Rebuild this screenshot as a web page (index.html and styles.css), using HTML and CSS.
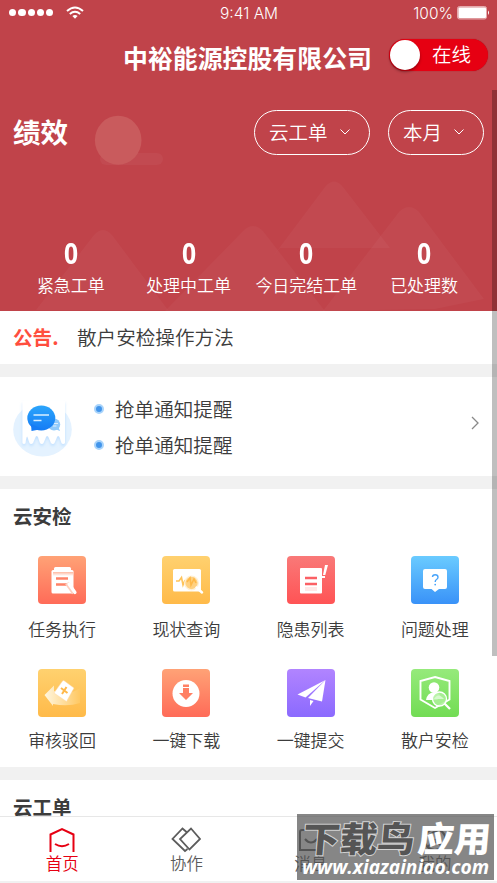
FILE: index.html
```
<!DOCTYPE html>
<html lang="zh-CN">
<head>
<meta charset="utf-8">
<title>中裕能源控股有限公司</title>
<link rel="stylesheet" href="styles.css">
</head>
<body>
<div class="screen">
  <header class="hero">
    <svg class="hero-art" viewBox="0 0 497 311" aria-hidden="true">
      <rect x="100" y="153" width="63" height="12" rx="6" fill="#fff" fill-opacity=".04"/>
      <ellipse cx="118.200" cy="140.200" rx="23.300" ry="24.500" fill="#c95b5d"/>
      <g fill="#fff" fill-opacity=".035">
        <path d="M36 310L94 235Q103 225 112 235L168 310Z"/>
        <path d="M165 311L243 231Q253 221 263 231L325 311Z"/>
        <path d="M271 259L325 187Q334 176 343 187L390 248H280Z"/>
        <path d="M323 311L399 212Q409 202 419 212L484 299L435 309Z"/>
      </g>
    </svg>
    <div class="status">
      <div class="signal">
        <i></i><i></i><i></i><i></i><i></i>
        <svg class="wifi" viewBox="0 0 18 13" fill="none" stroke="#fff" stroke-width="2">
          <path d="M1 5Q9-2 17 5M3.800 8Q9 3.600 14.200 8"/><path d="M6.400 10Q9 8 11.600 10L9 12.700Z" fill="#fff" stroke="none"/>
        </svg>
      </div>
      <span class="time">9:41 AM</span>
      <div class="power"><span>100%</span>
        <svg class="battery" viewBox="0 0 33 14"><rect x=".5" y=".5" width="29" height="12.500" rx="2" fill="#d9878b" stroke="#e5aaad"/><rect x="1.500" y="1.500" width="27.500" height="10.500" rx="1" fill="#fff"/><path d="M31 4.500Q33 6.700 31 9Z" fill="#fff"/></svg>
      </div>
    </div>
    <div class="titlebar">
      <h1>中裕能源控股有限公司</h1>
      <div class="switch"><span class="knob"></span><span>在线</span></div>
    </div>
    <div class="filters">
      <h2>绩效</h2>
      <div class="pill pill-wide">云工单<svg viewBox="0 0 10 6"><path d="M.5.500L5 5L9.500.500"/></svg></div>
      <div class="pill">本月<svg viewBox="0 0 10 6"><path d="M.5.500L5 5L9.500.500"/></svg></div>
    </div>
    <div class="stats">
      <div><b>0</b><span>紧急工单</span></div>
      <div><b>0</b><span>处理中工单</span></div>
      <div><b>0</b><span>今日完结工单</span></div>
      <div><b>0</b><span>已处理数</span></div>
    </div>
  </header>

  <section class="notice"><strong>公告.</strong><span>散户安检操作方法</span></section>

  <section class="reminders">
    <svg class="chat" viewBox="0 0 60 60">
      <defs>
        <linearGradient id="chatBlue" x2="0" y2="1"><stop stop-color="#2ba5fb"/><stop offset="1" stop-color="#167cf5"/></linearGradient>
        <filter id="paper" x="-20%" y="-20%" width="140%" height="150%"><feDropShadow dx="0" dy="2" stdDeviation="1.500" flood-color="#79bdff" flood-opacity=".35"/></filter>
      </defs>
      <ellipse cx="29.500" cy="30.500" rx="29.300" ry="27" fill="#e4f2ff"/>
      <path filter="url(#paper)" fill="#fff" d="M9.500 2H52V44Q50 46 48.500 44L46.500 38Q45 36 44 38L41.500 44Q40 46 38 44L35.500 38Q34 36 33 38L30.500 44Q29 46 27 44L25 38Q23.500 36 22.500 38L20 44Q18 46 16.500 44L14.500 38Q13.500 36 12.500 44Q11 46 9.500 44Z"/>
      <ellipse cx="41" cy="25.500" rx="6.200" ry="6" fill="#91cafb"/><path d="M42 30L47 32L45 27Z" fill="#91cafb"/><path d="M40 24.500H45M40 27H43.500" stroke="#fff" stroke-opacity=".7"/>
      <ellipse cx="28.300" cy="19" rx="14" ry="12.500" fill="url(#chatBlue)"/><path d="M18 25L18.500 32L29 30Z" fill="#167cf5"/>
      <path d="M20.500 16H36M20.500 21.500H28.500" stroke="#d9efff" stroke-width="1.500"/>
    </svg>
    <ul><li>抢单通知提醒</li><li>抢单通知提醒</li></ul>
    <svg class="more" viewBox="0 0 8 14"><path d="M1 1L7 7L1 13"/></svg>
  </section>

  <section class="services">
    <h3>云安检</h3>
    <div class="grid">
      <div class="item"><span class="tile orange"><svg viewBox="0 0 48 48">
        <defs><linearGradient id="fadeOrange" x2="0" y2="1"><stop stop-color="#ffb9a0"/><stop offset="1" stop-color="#fff"/></linearGradient></defs>
        <rect x="13.500" y="14" width="22" height="23.500" rx="1.500" fill="#fff"/><path d="M15 16H35V20H15Z" fill="url(#fadeOrange)"/><rect x="16" y="11" width="17" height="5" rx="1.500" fill="#fff"/>
        <path d="M18 22.500H30M18 28.500H29" stroke="#ff8267" stroke-width="2.500"/><path d="M29 27L36 37" stroke="#ffcfc0" stroke-width="4.500"/><path d="M31 28L37 36.500" stroke="#fff" stroke-width="3.200" stroke-linecap="round"/></svg></span><span>任务执行</span></div>
      <div class="item"><span class="tile yellow"><svg viewBox="0 0 48 48" fill="none">
        <rect x="11" y="13" width="28" height="22.500" rx="1.500" fill="#fff"/><path d="M14 25H17L19.500 21.500L21 29L23 24" stroke="#ffc45a" stroke-width="1.600"/>
        <circle cx="29.500" cy="27" r="6.800" fill="#ffd181" stroke="#fff1d7" stroke-width="1.300"/><path d="M25 26L28 22L29 29L32 23L34 27" stroke="#ffb948" stroke-width="1.600"/><path d="M34.500 31.500L40 36.500" stroke="#fff" stroke-width="2.500" stroke-linecap="round"/></svg></span><span>现状查询</span></div>
      <div class="item"><span class="tile red"><svg viewBox="0 0 48 48">
        <rect x="13" y="12" width="22" height="25.500" rx="1" fill="#fff"/><path d="M38 9L41 9L38.300 19H36Z" fill="#fff"/><path d="M35 20H38V22H35Z" fill="#fff"/>
        <path d="M18 22H30M18 28H30" stroke="#fb6065" stroke-width="2.400"/><path d="M18 31H30V35H18Z" fill="#ffe9e8"/></svg></span><span>隐患列表</span></div>
      <div class="item"><span class="tile blue"><svg viewBox="0 0 48 48" fill="none">
        <path d="M14 13H34Q36 13 36 15V31Q36 33 34 33H28L24 36L20.500 33H14Q12 33 12 31V15Q12 13 14 13Z" fill="#fff"/>
        <path d="M21.500 21Q21.500 18.700 24.200 18.700Q27 18.700 27 21.200Q27 22.500 25.500 23.500Q24.200 24.400 24.200 26" stroke="#48a4fa" stroke-width="1.400"/><circle cx="24.200" cy="28.600" r=".9" fill="#48a4fa"/></svg></span><span>问题处理</span></div>
      <div class="item"><span class="tile yellow"><svg viewBox="0 0 48 48">
        <defs><linearGradient id="arrowFade"><stop stop-color="#fff6df"/><stop offset="1" stop-color="#ffc862"/></linearGradient></defs>
        <path d="M6.500 26L16 16.500V22Q30 28 42 19V34Q30 38 15 35V37Z" fill="url(#arrowFade)"/><path d="M26.500 12Q25.500 11 24.500 12L16 24L28.500 32.500L36 19Z" fill="#fff" stroke="#ffd6a2" stroke-width=".5"/>
        <path d="M23 19L29.500 24M28.500 18L24 25" stroke="#ffb94b" stroke-width="2"/></svg></span><span>审核驳回</span></div>
      <div class="item"><span class="tile orange"><svg viewBox="0 0 48 48">
        <circle cx="24" cy="24.500" r="13.500" fill="#fff"/><path d="M21 15.500H27V18H21Z" fill="#ff8064"/><path d="M21 19H27V24H31L24 31L17 24H21Z" fill="#ff8064"/></svg></span><span>一键下载</span></div>
      <div class="item"><span class="tile purple"><svg viewBox="0 0 48 48" fill="#fff">
        <path d="M38.500 11L10.500 25.500L18.500 28.500Z"/><path d="M38.500 11L21 29L35 32.500Z"/><path d="M23 31L26.500 32L23 37Z"/></svg></span><span>一键提交</span></div>
      <div class="item"><span class="tile green"><svg viewBox="0 0 48 48" fill="none">
        <path d="M24 8L38.500 12V30.500L24 39L9.500 30.500V12Z" stroke="#fff" stroke-width="1.900"/><circle cx="23" cy="18.500" r="5.300" fill="#fff"/><path d="M15 31Q16 24 23 23Q28 23 30 28L26 31Z" fill="#fff"/>
        <circle cx="28.500" cy="30" r="7" fill="#adf19a" fill-opacity=".85" stroke="#fff" stroke-width="1.300"/><path d="M23 30Q27 23 33 30Z" fill="#d7f8ce"/><path d="M33.500 34.500L39 40" stroke="#fff" stroke-width="2.300"/></svg></span><span>散户安检</span></div>
    </div>
  </section>

  <section class="orders"><h3>云工单</h3></section>

  <nav class="tabs">
    <div class="tab active"><svg viewBox="0 0 30 26"><path d="M3.500 25V7.500L15 2L26.500 7.500V25M8 17Q15 21.500 22 17"/></svg><span>首页</span></div>
    <div class="tab"><svg class="thin" viewBox="0 0 30 26"><path d="M15.500 5L11.500 1.500L1.500 12L14 24L16.500 22M20 1.500L29 12L18.500 22.500L9 12Z"/></svg><span>协作</span></div>
    <div class="tab"><svg viewBox="0 0 30 26"><path d="M6 3H24Q27 3 27 6V19Q27 23 23 23H4V5Q4 3 6 3ZM9 12Q15 19 21 12"/></svg><span>消息</span></div>
    <div class="tab"><svg viewBox="0 0 30 26"><circle cx="15" cy="12.500" r="10.500"/><circle cx="15" cy="9" r="4"/><path d="M8 20Q15 10 22 20"/></svg><span>我的</span></div>
  </nav>
  <div class="scrollbar"></div>
  <svg class="watermark" viewBox="0 0 197 66">
    <g class="mark" transform="skewX(-5)"><text class="dark" x="8" y="38" textLength="112" lengthAdjust="spacingAndGlyphs">下载鸟</text><text x="123" y="38" textLength="73" lengthAdjust="spacingAndGlyphs">应用</text></g>
    <text class="url" x="5" y="60" textLength="187" lengthAdjust="spacingAndGlyphs">www.xiazainiao.com</text>
  </svg>
</div>
</body>
</html>
```
FILE: styles.css
```
*, *::before { box-sizing: border-box; }
body { margin: 0; background: #f1f1f1; color: #3c3c3c; font-family: "Noto Sans CJK SC", sans-serif; font-weight: 350; }
h1, h2, h3, ul { margin: 0; padding: 0; }
svg { display: block; }
.screen { position: relative; width: 497px; height: 883px; overflow: hidden; display: flex; flex-direction: column; }

.hero { position: relative; height: 311px; flex: none; background: #c0434a; color: #fff; }
.hero-art { position: absolute; inset: 0; width: 497px; height: 311px; }
.hero > div { position: relative; }
.status { height: 28px; display: grid; grid-template-columns: 1fr auto 1fr; align-items: center; padding: 0 8px 0 9px; font: 300 15.500px/28px Inter, sans-serif; }
.signal { display: flex; align-items: center; gap: 2px; padding-bottom: 3px; }
.signal i { width: 7.300px; height: 7.300px; border-radius: 50%; background: #fff; }
.wifi { width: 18px; height: 13px; margin-left: 11px; }
.power { display: flex; justify-content: flex-end; align-items: center; gap: 4px; margin-right: -1px; }
.battery { width: 33px; height: 14px; margin-bottom: 3px; }
.titlebar { height: 62px; padding: 11px 9px 0 123px; display: flex; justify-content: space-between; }
h1 { font-size: 24.900px; line-height: 36px; font-weight: 700; white-space: nowrap; }
.switch { width: 99px; height: 32px; border-radius: 16px; background: #e60012; display: flex; gap: 12px; font-size: 19.500px; line-height: 30px; box-shadow: 0 0 1px #940b18; }
.knob { width: 30px; height: 30px; margin: 1px 0 0 1px; border-radius: 50%; background: #fff; box-shadow: 0 2px 3px #0005; }
.filters { display: flex; align-items: center; height: 84px; padding: 0 13px; }
h2 { font-size: 27.500px; line-height: 40px; margin: -3px auto 0 0; font-weight: 700; }
.pill { width: 96px; height: 45px; border: 1.300px solid #fff; border-radius: 23px; display: flex; align-items: center; padding-left: 14px; gap: 12px; font-size: 19.500px; line-height: 40px; white-space: nowrap; }
.pill-wide { width: 116px; margin-right: 18px; }
.pill svg { width: 10px; height: 6px; fill: none; stroke: #fff; overflow: visible; }
.stats { display: grid; grid-template-columns: repeat(4, 1fr); padding: 59px 14px 0 12px; text-align: center; white-space: nowrap; }
.stats > div { display: flex; flex-direction: column; align-items: center; }
.stats b { font: 700 28px/40px "Noto Sans", sans-serif; transform: scaleX(.88); }
.stats span { font-size: 17px; line-height: 24px; }

.notice { height: 53px; flex: none; background: #fff; padding: 0 13px; display: flex; align-items: center; font-size: 19.600px; line-height: 50px; padding-bottom: 2px; }
.notice strong { color: #ff4e3e; width: 64px; }
.reminders { height: 99px; flex: none; margin: 13px 0; background: #fff; display: flex; align-items: center; padding: 0 18px 0 13px; }
.chat { width: 60px; height: 60px; margin-top: 4px; }
.reminders ul { list-style: none; margin-left: 21px; font-size: 19.600px; line-height: 36px; flex: 1; }
.reminders li { display: flex; align-items: center; gap: 11px; }
.reminders li::before { content: ""; width: 10px; height: 10px; border: 2px solid #a9d4fb; border-radius: 50%; background: #4295eb; }
.more { width: 8px; height: 14px; margin-top: -7px; fill: none; stroke: #898989; stroke-width: 1.300; }
h3 { font-size: 19.500px; line-height: 34px; font-weight: 700; padding-left: 13px; }
.services { height: 278px; flex: none; background: #fff; padding-top: 10px; }
.grid { display: grid; grid-template-columns: repeat(4, 1fr); grid-auto-rows: 112.500px; margin-top: 23px; }
.item { display: flex; flex-direction: column; align-items: center; gap: 13px; font-size: 17px; line-height: 24px; }
.item:nth-child(n + 5) { gap: 11.500px; }
.tile { width: 48px; height: 48px; border-radius: 4px; overflow: hidden; }
.orange { background: linear-gradient(#ffa276, #ff6b58); }
.yellow { background: linear-gradient(#ffd16f, #ffba49); }
.red { background: linear-gradient(#f97978, #ff5355); }
.blue { background: linear-gradient(#6acbff, #3992f8); }
.purple { background: linear-gradient(#b184ff, #8b6afe); }
.green { background: linear-gradient(#96ea7b, #72dc54); }
.orders { height: 36px; flex: none; margin-top: 13px; padding-top: 10px; background: #fff; }
.orders h3 { line-height: 33px; }
.tabs { position: relative; height: 65px; flex: none; border-top: 1px solid #e7e7e7; background: #fff; display: grid; grid-template-columns: repeat(4, 1fr); }
.tab { display: flex; flex-direction: column; align-items: center; padding-top: 10px; font-size: 16.500px; line-height: 24px; color: #5c5c5c; }
.tab svg { width: 30px; height: 26px; fill: none; stroke: currentColor; stroke-width: 2; flex: none; }
.tab .thin { stroke-width: 1.800; }
.tab span { margin-top: -2px; }
.tab.active { color: #e60012; }
.scrollbar { position: absolute; left: 492px; top: 90px; width: 5px; height: 566px; background: rgba(0,0,0,.25); }
.watermark { position: absolute; left: 297px; top: 814px; width: 197px; height: 66px; background: rgba(80,80,80,.69); }
.mark text { font: 900 35px "Noto Sans CJK SC", sans-serif; fill: #fff; }
.mark .dark { fill: #555; stroke: #d2d2d2; stroke-width: 2px; paint-order: stroke; }
.url { font: italic 700 19px "Open Sans", sans-serif; fill: #fff; }
```
